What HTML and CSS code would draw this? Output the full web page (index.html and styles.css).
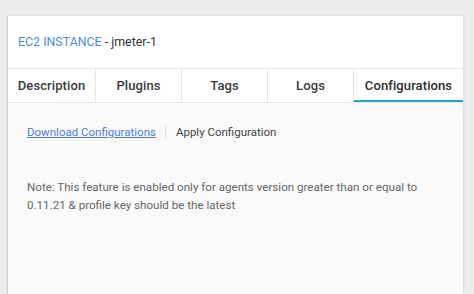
FILE: index.html
```html
<!DOCTYPE html>
<html>
<head>
<meta charset="utf-8">
<link rel="stylesheet" href="styles.css">
</head>
<body>
<div class="card">
  <div class="card-header">
    <span class="title-type">EC2 INSTANCE</span><span class="title-name">&nbsp;- jmeter-1</span>
  </div>
  <div class="tabs">
    <div class="tab">Description</div>
    <div class="tab">Plugins</div>
    <div class="tab">Tags</div>
    <div class="tab">Logs</div>
    <div class="tab active">Configurations</div>
  </div>
  <div class="content">
    <div class="actions">
      <a class="link" href="#">Download Configurations</a>
      <span class="divider"></span>
      <span class="action">Apply Configuration</span>
    </div>
    <p class="note">Note: This feature is enabled only for agents version greater than or equal to<br>0.11.21 &amp; profile key should be the latest</p>
  </div>
</div>
</body>
</html>
```
FILE: styles.css
```css
html, body {
  margin: 0;
  padding: 0;
}
body {
  background: #ececee;
  font-family: Roboto, "Liberation Sans", sans-serif;
  height: 294px;
  overflow: hidden;
}
.card {
  margin: 16px 11px 0 8px;
  height: 278px;
  background: #ffffff;
  box-shadow: -1px 0 1px rgba(0,0,0,0.12), 1px 0 2px rgba(0,0,0,0.06);
  display: flex;
  flex-direction: column;
}
.card-header {
  height: 52px;
  display: flex;
  align-items: center;
  padding: 0 0 1px 10px;
  font-size: 12.4px;
  box-sizing: border-box;
}
.title-type {
  color: #4a8fd8;
}
.title-name {
  color: #333333;
}
.tabs {
  display: grid;
  grid-template-columns: 87px 86px 86px 86px 1fr;
  border-top: 1px solid #e5e5e7;
  border-bottom: 1px solid #e5e5e7;
  box-sizing: border-box;
  height: 35px;
}
.tab {
  display: flex;
  align-items: center;
  justify-content: center;
  font-size: 13px;
  font-weight: 500;
  color: #3a3a3a;
  border-left: 1px solid #e5e5e7;
  letter-spacing: 0.1px;
}
.tab:first-child {
  border-left: none;
}
.tab.active {
  box-shadow: inset 0 -2px 0 #1fa3c8;
  color: #2b2b2b;
}
.content {
  flex: 1;
  background: #fafafb;
  padding: 0 0 0 19px;
}
.actions {
  display: flex;
  align-items: center;
  height: 22px;
  margin-top: 18px;
  font-size: 11.5px;
}
.link {
  color: #4a7fd6;
  text-decoration: underline;
}
.divider {
  width: 1px;
  height: 14px;
  background: #e3e3e5;
  margin: 0 10px 0 9px;
}
.action {
  color: #444444;
}
.note {
  margin: 35px 0 0;
  font-size: 11.6px;
  line-height: 18px;
  color: #666666;
}
```
